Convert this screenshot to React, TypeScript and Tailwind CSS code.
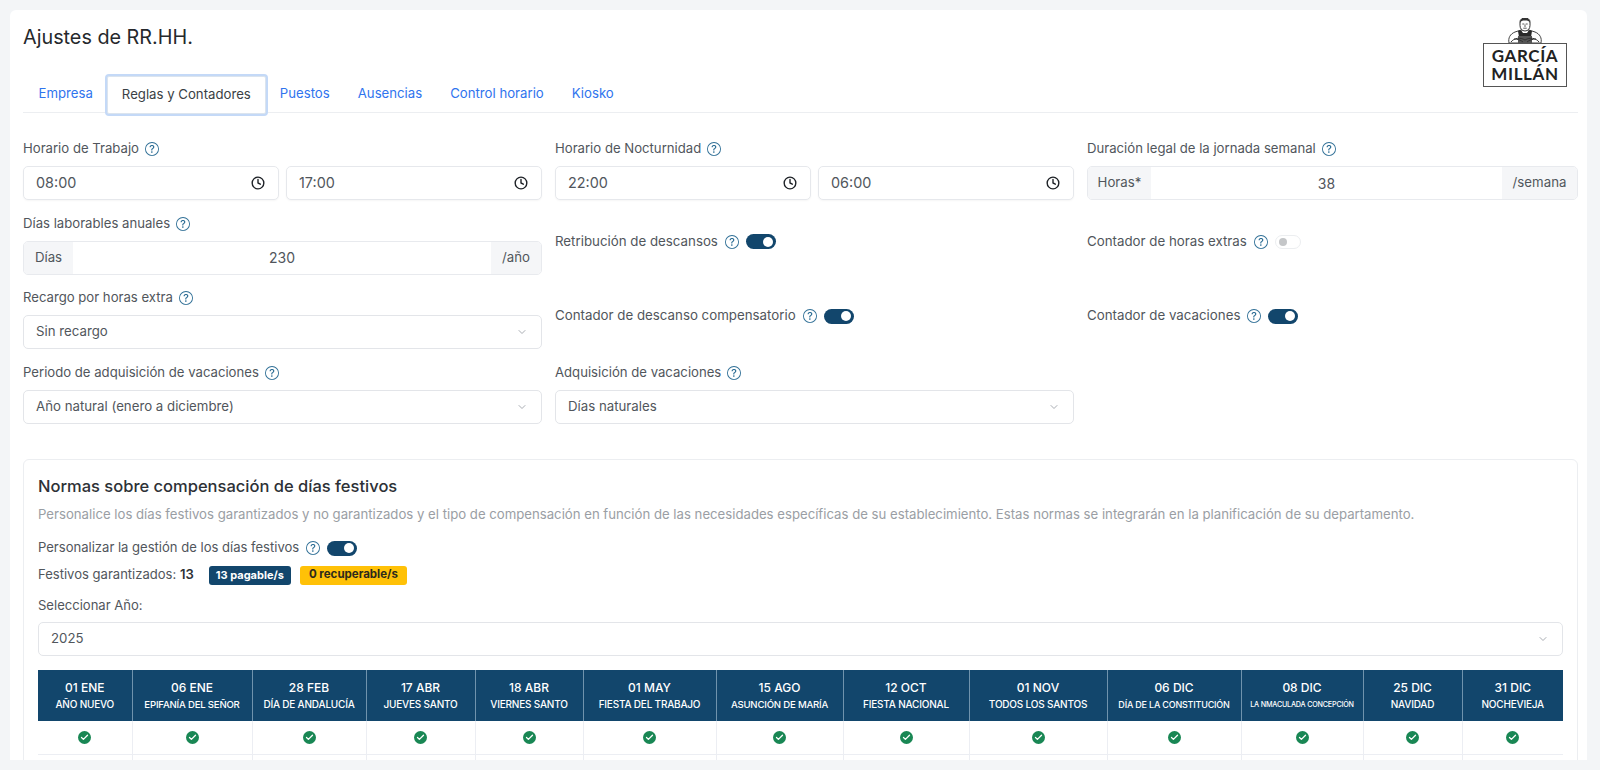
import { BsQuestionCircle } from "react-icons/bs";
import { Clock, ChevronDown, Check } from "lucide-react";

const Help = () => <BsQuestionCircle className="shrink-0 text-[#2f6f96]" size={14} />;

const Toggle = ({ on = true }: { on?: boolean }) =>
  on ? (
    <span className="flex h-[15px] w-[30px] shrink-0 items-center justify-end rounded-full bg-[#12466c] pr-[3px]">
      <span className="h-[10px] w-[10px] rounded-full bg-white" />
    </span>
  ) : (
    <span className="flex h-[14px] w-[26px] shrink-0 items-center rounded-full border border-[#eceef0] bg-white pl-[3px]">
      <span className="h-[8px] w-[8px] rounded-full bg-[#c4c6c8]" />
    </span>
  );

const Label = ({ children }: { children: React.ReactNode }) => (
  <div className="flex h-5 items-center gap-[6px] text-[13.15px] text-[#51565c]">
    <span>{children}</span>
    <Help />
  </div>
);

const Time = ({ value }: { value: string }) => (
  <div className="flex h-[34px] flex-1 items-center justify-between rounded-[5px] border border-[#e6e8ec] bg-white pl-[12px] pr-[13px] text-[14.4px] text-[#51565c] shadow-[0_1px_2px_rgba(0,0,0,0.04)]">
    <span>{value}</span>
    <Clock size={14} strokeWidth={2.4} className="text-[#1f2328]" />
  </div>
);

const Group = ({ pre, val, post, preW, postW }: { pre: string; val: string; post: string; preW: string; postW: string }) => (
  <div className="flex h-[34px] items-stretch overflow-hidden rounded-[5px] border border-[#e8eaee] text-[13.25px] text-[#51565c]">
    <span className={`flex items-center justify-center bg-[#f5f6f8] ${preW}`}>{pre}</span>
    <span className="flex flex-1 items-center justify-center bg-white text-[14px]">{val}</span>
    <span className={`flex items-center justify-center bg-[#f5f6f8] ${postW}`}>{post}</span>
  </div>
);

const Select = ({ value }: { value: string }) => (
  <div className="flex h-[34px] items-center justify-between rounded-[5px] border border-[#e3e5e9] bg-white pl-[12px] pr-[13px] text-[13.25px] text-[#51565c]">
    <span>{value}</span>
    <ChevronDown size={12} className="text-[#a9adb3]" />
  </div>
);

const Field = ({ label, children }: { label: string; children: React.ReactNode }) => (
  <div className="flex h-[62px] flex-col gap-[7px]">
    <Label>{label}</Label>
    {children}
  </div>
);

const ToggleCell = ({ label, on }: { label: string; on?: boolean }) => (
  <div className="flex h-[56px] items-center gap-[7px] text-[13.3px] text-[#51565c]">
    <span>{label}</span>
    <Help />
    <Toggle on={on} />
  </div>
);

const holidays = [
  { d: "01 ENE", n: "AÑO NUEVO", w: "w-[94px]", s: "text-[10px]" },
  { d: "06 ENE", n: "EPIFANÍA DEL SEÑOR", w: "w-[120px]", s: "text-[9.6px]" },
  { d: "28 FEB", n: "DÍA DE ANDALUCÍA", w: "w-[114px]", s: "text-[10px]" },
  { d: "17 ABR", n: "JUEVES SANTO", w: "w-[109px]", s: "text-[10px]" },
  { d: "18 ABR", n: "VIERNES SANTO", w: "w-[108px]", s: "text-[10px]" },
  { d: "01 MAY", n: "FIESTA DEL TRABAJO", w: "w-[133px]", s: "text-[10px]" },
  { d: "15 AGO", n: "ASUNCIÓN DE MARÍA", w: "w-[127px]", s: "text-[9.6px]" },
  { d: "12 OCT", n: "FIESTA NACIONAL", w: "w-[126px]", s: "text-[10px]" },
  { d: "01 NOV", n: "TODOS LOS SANTOS", w: "w-[138px]", s: "text-[10px]" },
  { d: "06 DIC", n: "DÍA DE LA CONSTITUCIÓN", w: "w-[134px]", s: "text-[9px]" },
  { d: "08 DIC", n: "LA NMACULADA CONCEPCIÓN", w: "w-[122px]", s: "text-[7.2px]" },
  { d: "25 DIC", n: "NAVIDAD", w: "w-[99px]", s: "text-[10px]" },
  { d: "31 DIC", n: "NOCHEVIEJA", w: "w-[101px]", s: "text-[10px]" },
];

const Logo = () => (
  <div className="absolute right-[20px] top-[8px] flex w-[84px] flex-col items-center">
    <svg width="36" height="26" viewBox="0 0 36 26" className="-mb-[1px]">
      <path d="M2 25c-1-5 1-9 6-11l6-2h8l6 2c5 2 7 6 6 11z" fill="#fff" stroke="#444" strokeWidth="1" />
      <path d="M11 13l1 6h12l1-6-3-1-2 3h-4l-2-3z" fill="#2a2a2a" />
      <rect x="11" y="18" width="14" height="7" fill="#555" />
      <path d="M4 24c3-4 9-5 14-2 5-3 11-2 14 2M7 21c3 0 7 1 9 3M29 21c-3 0-7 1-9 3" fill="none" stroke="#333" strokeWidth="1" />
      <path d="M13 4c0-2.500 2-4 5-4s5 1.500 5 4v3.500c0 3-2 5.500-5 5.500s-5-2.500-5-5.500z" fill="#fff" stroke="#333" strokeWidth="1" />
      <path d="M13 5c0-3.500 2-5 5-5s5 1.500 5 5c-1-2-2-2.500-5-2.500s-4 .5-5 2.500z" fill="#333" />
      <path d="M15.300 6h2M18.700 6h2M18 6.500v2.500M16.300 10.200h3.400" stroke="#333" strokeWidth=".8" fill="none" />
    </svg>
    <div className="flex h-[44px] w-[84px] flex-col items-center justify-center border-[1.5px] border-[#555] bg-white font-['Lato',sans-serif] text-[17px] font-bold leading-[18px] tracking-[0.6px] text-[#222]">
      <span>GARCÍA</span>
      <span>MILLÁN</span>
    </div>
  </div>
);

export default function App() {
  const tabs = ["Empresa", "Reglas y Contadores", "Puestos", "Ausencias", "Control horario", "Kiosko"];
  return (
    <div className="h-[770px] overflow-hidden bg-[#f3f5f7] pb-[10px] pl-[10px] pr-[13px] pt-[10px] font-['Inter',sans-serif]">
      <div className="relative h-[750px] overflow-hidden rounded-t-[6px] bg-white pl-[13px] pr-[9px] pt-[13px]">
        <Logo />
        <h1 className="text-[19.8px] font-normal leading-7 text-[#25282c]">Ajustes de RR.HH.</h1>
        <nav className="mt-[25px] flex h-[37px] items-stretch border-b border-[#eceef1] pl-[1.5px] text-[13.2px] text-[#2f74ee]">
          {tabs.map((t) => (
            t === "Reglas y Contadores" ? (
              <span key={t} className="z-10 flex h-[38px] items-center rounded-[2px] border border-[#dbe4ee] bg-white px-[14px] text-[#3a3f45] shadow-[0_0_0_2px_#c4d9f7]">{t}</span>
            ) : (
              <span key={t} className="flex items-center px-[14px]">{t}</span>
            )
          ))}
        </nav>

        <div className="mt-[26px] grid grid-cols-[519px_519px_1fr] gap-x-[13px] gap-y-[12.5px]">
          <Field label="Horario de Trabajo">
            <div className="flex gap-[7px]"><Time value="08:00" /><Time value="17:00" /></div>
          </Field>
          <Field label="Horario de Nocturnidad">
            <div className="flex gap-[7px]"><Time value="22:00" /><Time value="06:00" /></div>
          </Field>
          <Field label="Duración legal de la jornada semanal">
            <Group pre="Horas*" val="38" post="/semana" preW="w-[63px]" postW="w-[75px]" />
          </Field>

          <Field label="Días laborables anuales">
            <Group pre="Días" val="230" post="/año" preW="w-[49px]" postW="w-[50px]" />
          </Field>
          <ToggleCell label="Retribución de descansos" />
          <ToggleCell label="Contador de horas extras" on={false} />

          <Field label="Recargo por horas extra">
            <Select value="Sin recargo" />
          </Field>
          <ToggleCell label="Contador de descanso compensatorio" />
          <ToggleCell label="Contador de vacaciones" />

          <Field label="Periodo de adquisición de vacaciones">
            <Select value="Año natural (enero a diciembre)" />
          </Field>
          <Field label="Adquisición de vacaciones">
            <Select value="Días naturales" />
          </Field>
        </div>

        <section className="mt-[34.5px] rounded-[6px] border border-[#eceef1] bg-white px-[14px] pt-[14px]">
          <h2 className="text-[16.5px] font-medium leading-6 text-[#2d3136]">Normas sobre compensación de días festivos</h2>
          <p className="mt-[6px] text-[13.18px] leading-5 text-[#9a9ea4]">
            Personalice los días festivos garantizados y no garantizados y el tipo de compensación en función de las necesidades específicas de su establecimiento. Estas normas se integrarán en la planificación de su departamento.
          </p>
          <div className="mt-[14px] flex h-5 items-center gap-[7px] text-[13.05px] text-[#51565c]">
            <span>Personalizar la gestión de los días festivos</span>
            <Help />
            <Toggle />
          </div>
          <div className="mt-[7px] flex h-5 items-center text-[13.05px] text-[#51565c]">
            <span>Festivos garantizados: <b className="font-semibold text-[#2d3136]">13</b></span>
            <span className="ml-[15px] flex h-[19px] items-center rounded-[3px] bg-[#12466c] px-[7px] text-[11px] font-bold text-white">13 pagable/s</span>
            <span className="ml-[9px] flex h-[19px] items-center rounded-[3px] bg-[#ffc107] px-[9px] text-[11.5px] font-bold text-[#2d2a1c]">0 recuperable/s</span>
          </div>
          <div className="mt-[10px] h-5 text-[13.05px] leading-5 text-[#51565c]">Seleccionar Año:</div>
          <div className="mt-[7px]"><Select value="2025" /></div>

          <table className="mt-[14px] w-[1525px] table-fixed border-collapse">
            <thead>
              <tr className="h-[51px] bg-[#12466c] text-white">
                {holidays.map((h, i) => (
                  <th key={h.d} className={`${h.w} ${i ? "border-l border-[#6f93ad]" : ""} p-0 text-center font-medium`}>
                    <div className="text-[12px] leading-[17px]">{h.d}</div>
                    <div className={`${h.s} whitespace-nowrap leading-[17px] tracking-[-0.2px]`}>{h.n}</div>
                  </th>
                ))}
              </tr>
            </thead>
            <tbody>
              {[0, 1].map((r) => (
                <tr key={r} className="h-[33px] border-b border-[#eceef3]">
                  {holidays.map((h, i) => (
                    <td key={h.d} className={`${i ? "border-l border-[#eceef3]" : ""} p-0`}>
                      <span className="mx-auto flex h-[13px] w-[13px] items-center justify-center rounded-full bg-[#198754]">
                        <Check size={9} strokeWidth={3.5} className="text-white" />
                      </span>
                    </td>
                  ))}
                </tr>
              ))}
            </tbody>
          </table>
        </section>
      </div>
    </div>
  );
}
